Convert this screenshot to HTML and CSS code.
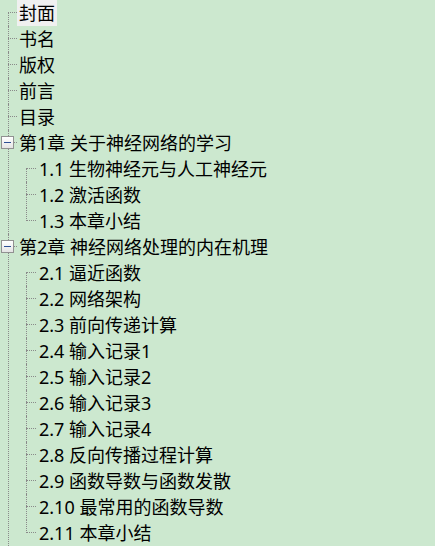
FILE: index.html
```html
<!DOCTYPE html>
<html lang="zh-CN">
<head>
  <meta charset="UTF-8">
  <meta name="viewport" content="width=device-width, initial-scale=1.0">
  <title>目录树</title>
  <link rel="stylesheet" href="styles.css">
</head>
<body>
  <ul class="tree">
    <li class="node first"><span class="label selected">封面</span></li>
    <li class="node"><span class="label">书名</span></li>
    <li class="node"><span class="label">版权</span></li>
    <li class="node"><span class="label">前言</span></li>
    <li class="node"><span class="label">目录</span></li>
    <li class="node open">
      <span class="toggle"></span>
      <span class="label">第1章 关于神经网络的学习</span>
      <ul class="children">
        <li class="node first"><span class="label">1.1 生物神经元与人工神经元</span></li>
        <li class="node"><span class="label">1.2 激活函数</span></li>
        <li class="node last"><span class="label">1.3 本章小结</span></li>
      </ul>
    </li>
    <li class="node open">
      <span class="toggle"></span>
      <span class="label">第2章 神经网络处理的内在机理</span>
      <ul class="children">
        <li class="node first"><span class="label">2.1 逼近函数</span></li>
        <li class="node"><span class="label">2.2 网络架构</span></li>
        <li class="node"><span class="label">2.3 前向传递计算</span></li>
        <li class="node"><span class="label">2.4 输入记录1</span></li>
        <li class="node"><span class="label">2.5 输入记录2</span></li>
        <li class="node"><span class="label">2.6 输入记录3</span></li>
        <li class="node"><span class="label">2.7 输入记录4</span></li>
        <li class="node"><span class="label">2.8 反向传播过程计算</span></li>
        <li class="node"><span class="label">2.9 函数导数与函数发散</span></li>
        <li class="node"><span class="label">2.10 最常用的函数导数</span></li>
        <li class="node last"><span class="label">2.11 本章小结</span></li>
      </ul>
    </li>
  </ul>
</body>
</html>
```

FILE: styles.css
```css
html, body {
  margin: 0;
  padding: 0;
}

body {
  background-color: #cce8cf;
  font-family: "Noto Sans", "Noto Sans CJK SC", sans-serif;
  font-size: 18px;
  color: #000000;
  overflow: hidden;
}

.tree,
.children {
  list-style: none;
  margin: 0;
  padding: 0;
}

.node {
  position: relative;
  padding-left: 17px;
}

/* vertical dotted line */
.node::before {
  content: "";
  position: absolute;
  left: 8px;
  top: 0;
  bottom: 0;
  border-left: 1px dotted #8a8a8a;
}

.node.first::before {
  top: 13px;
}

.node.last::before {
  bottom: auto;
  height: 13px;
}

/* horizontal dotted line */
.node::after {
  content: "";
  position: absolute;
  left: 8px;
  top: 12px;
  width: 9px;
  border-top: 1px dotted #8a8a8a;
}

.children .node {
  padding-left: 20px;
}

.children .node::before,
.children .node::after {
  left: 9px;
}

.children .node::after {
  width: 10px;
}

.label {
  display: block;
  width: fit-content;
  height: 26px;
  line-height: 26px;
  padding: 0 2px;
  white-space: nowrap;
}

.label.selected {
  background-color: #f0f0f0;
}

.toggle {
  position: absolute;
  left: 1px;
  top: 6px;
  width: 11px;
  height: 11px;
  border: 1px solid #919191;
  background: linear-gradient(#ffffff, #e4e4e4);
  z-index: 1;
}

.toggle::after {
  content: "";
  position: absolute;
  left: 2px;
  right: 2px;
  top: 5px;
  height: 1px;
  background-color: #2c4f94;
}
```
